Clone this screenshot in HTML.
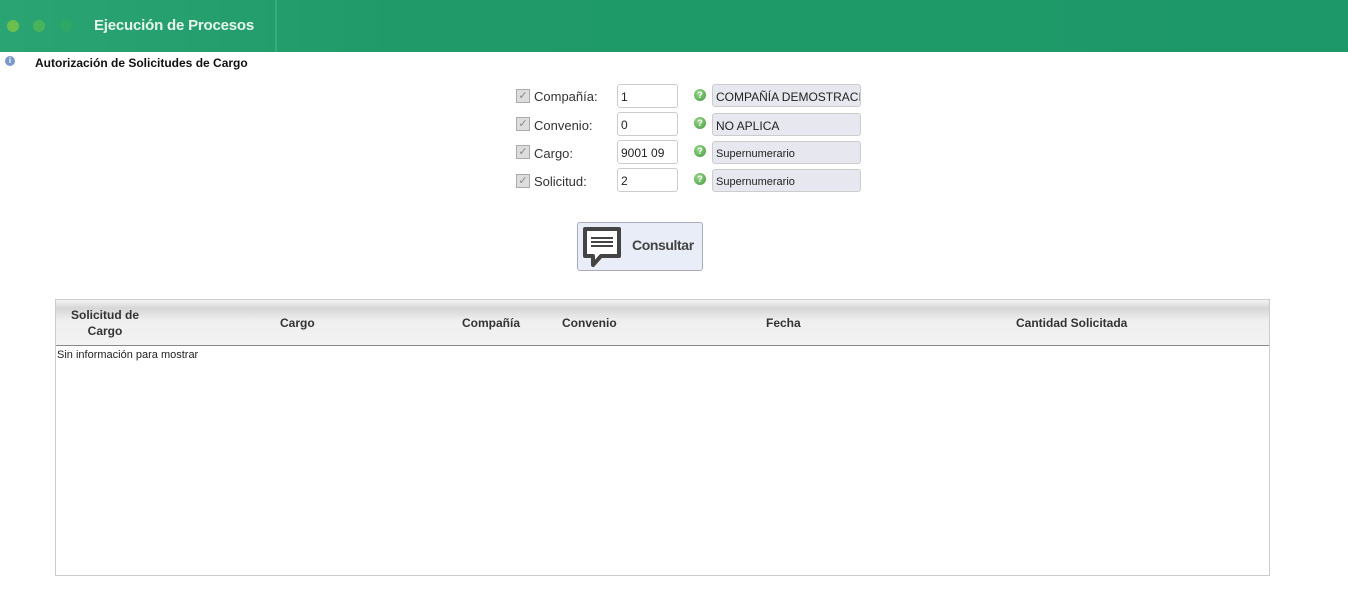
<!DOCTYPE html>
<html><head><meta charset="utf-8"><style>
body{margin:0;width:1348px;height:601px;background:#fff;font-family:"Liberation Sans",sans-serif;position:relative;overflow:hidden}
.hdr{position:absolute;left:0;top:0;width:1348px;height:52px;background:linear-gradient(90deg,#2aa472 0%,#1f9a68 30%,#1d9868 100%)}
.dot{position:absolute;top:20px;width:12px;height:12px;border-radius:6px}
.sep{position:absolute;left:275px;top:0;width:2px;height:52px;background:#2fae78}
.title{position:absolute;left:94px;top:17px;color:#e8f5ee;font-weight:bold;font-size:15px;letter-spacing:-0.2px}
.sub{position:absolute;left:35px;top:56px;font-size:12px;font-weight:bold;color:#111}
.abs{position:absolute}
.lbl{font-size:13px;color:#333}
.cb{width:12px;height:12px;border:1px solid #aaa;background:#ddd;font-size:11px;line-height:12px;text-align:center;color:#888}
.in{border:1px solid #ccc;border-radius:3px;font-size:12px;line-height:24px;padding-left:3px;box-sizing:border-box;width:61px;height:24px;color:#222}
.desc{width:149px;height:23px;border:1px solid #ccc;border-radius:3px;background:#e7e8ef;font-size:12px;line-height:24px;padding-left:3px;box-sizing:border-box;overflow:hidden;white-space:nowrap;color:#222}
.q{width:12px;height:12px;border-radius:6px;background:radial-gradient(circle at 40% 35%,#9fd88f,#3c9a3a);color:#fff;font-size:9px;font-weight:bold;text-align:center;line-height:12px}
.th{position:absolute;font-size:12px;font-weight:bold;color:#333;text-align:center}
</style></head><body>
<div class="hdr">
<div class="dot" style="left:7px;background:#6cbe4d"></div>
<div class="dot" style="left:33px;background:#48b35a"></div>
<div class="dot" style="left:60px;background:#2ea864"></div>
<div class="sep"></div>
<div class="title">Ejecución de Procesos</div>
</div>
<div class="abs" style="left:5px;top:56px;width:10px;height:10px;border-radius:5px;background:#7a98c8;color:#fff;font-size:8px;text-align:center;line-height:10px;font-weight:bold">i</div>
<div class="sub">Autorización de Solicitudes de Cargo</div>

<div class="abs cb" style="left:516px;top:89px">✓</div><div class="abs lbl" style="left:534px;top:89px">Compañía:</div>
<div class="abs in" style="left:617px;top:84px">1</div><div class="abs q" style="left:694px;top:89px">?</div>
<div class="abs desc" style="left:712px;top:84px">COMPAÑÍA DEMOSTRACIÓN</div>

<div class="abs cb" style="left:516px;top:117px">✓</div><div class="abs lbl" style="left:534px;top:118px">Convenio:</div>
<div class="abs in" style="left:617px;top:112px">0</div><div class="abs q" style="left:694px;top:117px">?</div>
<div class="abs desc" style="left:712px;top:113px">NO APLICA</div>

<div class="abs cb" style="left:516px;top:145px">✓</div><div class="abs lbl" style="left:534px;top:146px">Cargo:</div>
<div class="abs in" style="left:617px;top:140px">9001 09</div><div class="abs q" style="left:694px;top:145px">?</div>
<div class="abs desc" style="left:712px;top:141px;font-size:11px">Supernumerario</div>

<div class="abs cb" style="left:516px;top:174px">✓</div><div class="abs lbl" style="left:534px;top:174px">Solicitud:</div>
<div class="abs in" style="left:617px;top:168px">2</div><div class="abs q" style="left:694px;top:173px">?</div>
<div class="abs desc" style="left:712px;top:169px;font-size:11px">Supernumerario</div>

<div class="abs" style="left:577px;top:222px;width:126px;height:49px;border:1px solid #aab;border-radius:3px;background:#e8edf7;box-sizing:border-box">
<svg class="abs" style="left:3px;top:3px" width="42" height="44" viewBox="0 0 42 44"><path d="M4 3h34v27H20l-8 9v-9H4z" fill="#fff" stroke="#444" stroke-width="4" stroke-linejoin="round"/><path d="M10 12h22M10 16h22M10 20h22" stroke="#444" stroke-width="2"/></svg>
<div class="abs" style="left:54px;top:14px;font-size:14px;font-weight:bold;color:#444;letter-spacing:-0.4px">Consultar</div>
</div>

<div class="abs" style="left:55px;top:299px;width:1215px;height:277px;border:1px solid #ccc;box-sizing:border-box">
<div class="abs" style="left:0;top:0;width:1213px;height:45px;background:linear-gradient(#f4f4f4 0%,#d6d6d6 18%,#efefef 45%,#f2f2f2 100%);border-bottom:1px solid #888"></div>
<div class="th" style="left:5px;top:7px;width:88px;line-height:16px">Solicitud de<br>Cargo</div>
<div class="th" style="left:224px;top:16px">Cargo</div>
<div class="th" style="left:406px;top:16px">Compañía</div>
<div class="th" style="left:506px;top:16px">Convenio</div>
<div class="th" style="left:710px;top:16px">Fecha</div>
<div class="th" style="left:960px;top:16px">Cantidad Solicitada</div>
<div class="abs" style="left:1px;top:49px;font-size:11px;color:#222">Sin información para mostrar</div>
</div>
</body></html>
